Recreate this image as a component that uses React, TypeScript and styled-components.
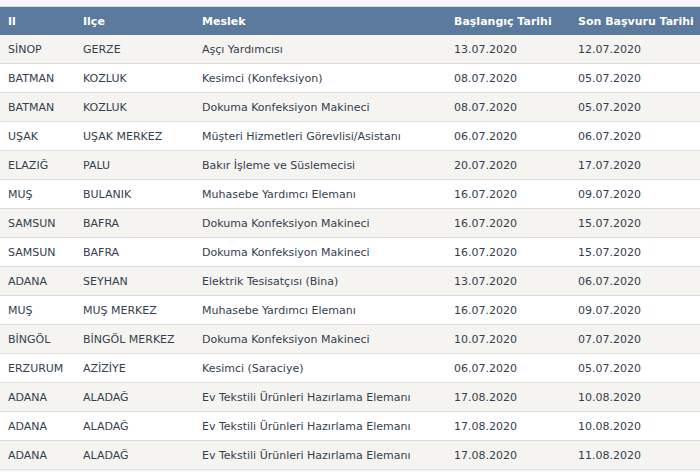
import React from 'react';
import styled, { createGlobalStyle } from 'styled-components';

const GlobalStyle = createGlobalStyle`
  html, body {
    margin: 0;
    padding: 0;
    background-color: #f7f7f7;
  }
`;

const Page = styled.div`
  padding-top: 6px;
  width: 700px;
  overflow: hidden;
  font-family: 'DejaVu Sans', Verdana, sans-serif;
`;

const Table = styled.table`
  width: 710px;
  border-collapse: collapse;
  table-layout: fixed;
  border-top: 1px solid #dcdcdc;
`;

const HeadCell = styled.th<{ $w?: number }>`
  width: ${(p) => (p.$w ? `${p.$w}px` : 'auto')};
  height: 28px;
  padding: 0 0 0 8px;
  background-color: #5b7a9d;
  color: #ffffff;
  font-size: 11px;
  font-weight: bold;
  text-align: left;
  white-space: nowrap;
`;

const Row = styled.tr<{ $odd: boolean }>`
  background-color: ${(p) => (p.$odd ? '#f5f4f0' : '#ffffff')};
  border-bottom: 1px solid #dddddd;
`;

const Cell = styled.td`
  height: 28px;
  padding: 0 0 0 8px;
  font-size: 11px;
  color: #34404f;
  white-space: nowrap;
`;

const rows = [
  ['SİNOP', 'GERZE', 'Aşçı Yardımcısı', '13.07.2020', '12.07.2020'],
  ['BATMAN', 'KOZLUK', 'Kesimci (Konfeksiyon)', '08.07.2020', '05.07.2020'],
  ['BATMAN', 'KOZLUK', 'Dokuma Konfeksiyon Makineci', '08.07.2020', '05.07.2020'],
  ['UŞAK', 'UŞAK MERKEZ', 'Müşteri Hizmetleri Görevlisi/Asistanı', '06.07.2020', '06.07.2020'],
  ['ELAZIĞ', 'PALU', 'Bakır İşleme ve Süslemecisi', '20.07.2020', '17.07.2020'],
  ['MUŞ', 'BULANIK', 'Muhasebe Yardımcı Elemanı', '16.07.2020', '09.07.2020'],
  ['SAMSUN', 'BAFRA', 'Dokuma Konfeksiyon Makineci', '16.07.2020', '15.07.2020'],
  ['SAMSUN', 'BAFRA', 'Dokuma Konfeksiyon Makineci', '16.07.2020', '15.07.2020'],
  ['ADANA', 'SEYHAN', 'Elektrik Tesisatçısı (Bina)', '13.07.2020', '06.07.2020'],
  ['MUŞ', 'MUŞ MERKEZ', 'Muhasebe Yardımcı Elemanı', '16.07.2020', '09.07.2020'],
  ['BİNGÖL', 'BİNGÖL MERKEZ', 'Dokuma Konfeksiyon Makineci', '10.07.2020', '07.07.2020'],
  ['ERZURUM', 'AZİZİYE', 'Kesimci (Saraciye)', '06.07.2020', '05.07.2020'],
  ['ADANA', 'ALADAĞ', 'Ev Tekstili Ürünleri Hazırlama Elemanı', '17.08.2020', '10.08.2020'],
  ['ADANA', 'ALADAĞ', 'Ev Tekstili Ürünleri Hazırlama Elemanı', '17.08.2020', '10.08.2020'],
  ['ADANA', 'ALADAĞ', 'Ev Tekstili Ürünleri Hazırlama Elemanı', '17.08.2020', '11.08.2020'],
];

export default function App() {
  return (
    <>
      <GlobalStyle />
      <Page>
        <Table>
          <thead>
            <tr>
              <HeadCell $w={67}>Il</HeadCell>
              <HeadCell $w={111}>Ilçe</HeadCell>
              <HeadCell $w={244}>Meslek</HeadCell>
              <HeadCell $w={116}>Başlangıç Tarihi</HeadCell>
              <HeadCell>Son Başvuru Tarihi</HeadCell>
            </tr>
          </thead>
          <tbody>
            {rows.map((r, i) => (
              <Row key={i} $odd={i % 2 === 0}>
                {r.map((c, j) => (
                  <Cell key={j}>{c}</Cell>
                ))}
              </Row>
            ))}
          </tbody>
        </Table>
      </Page>
    </>
  );
}
